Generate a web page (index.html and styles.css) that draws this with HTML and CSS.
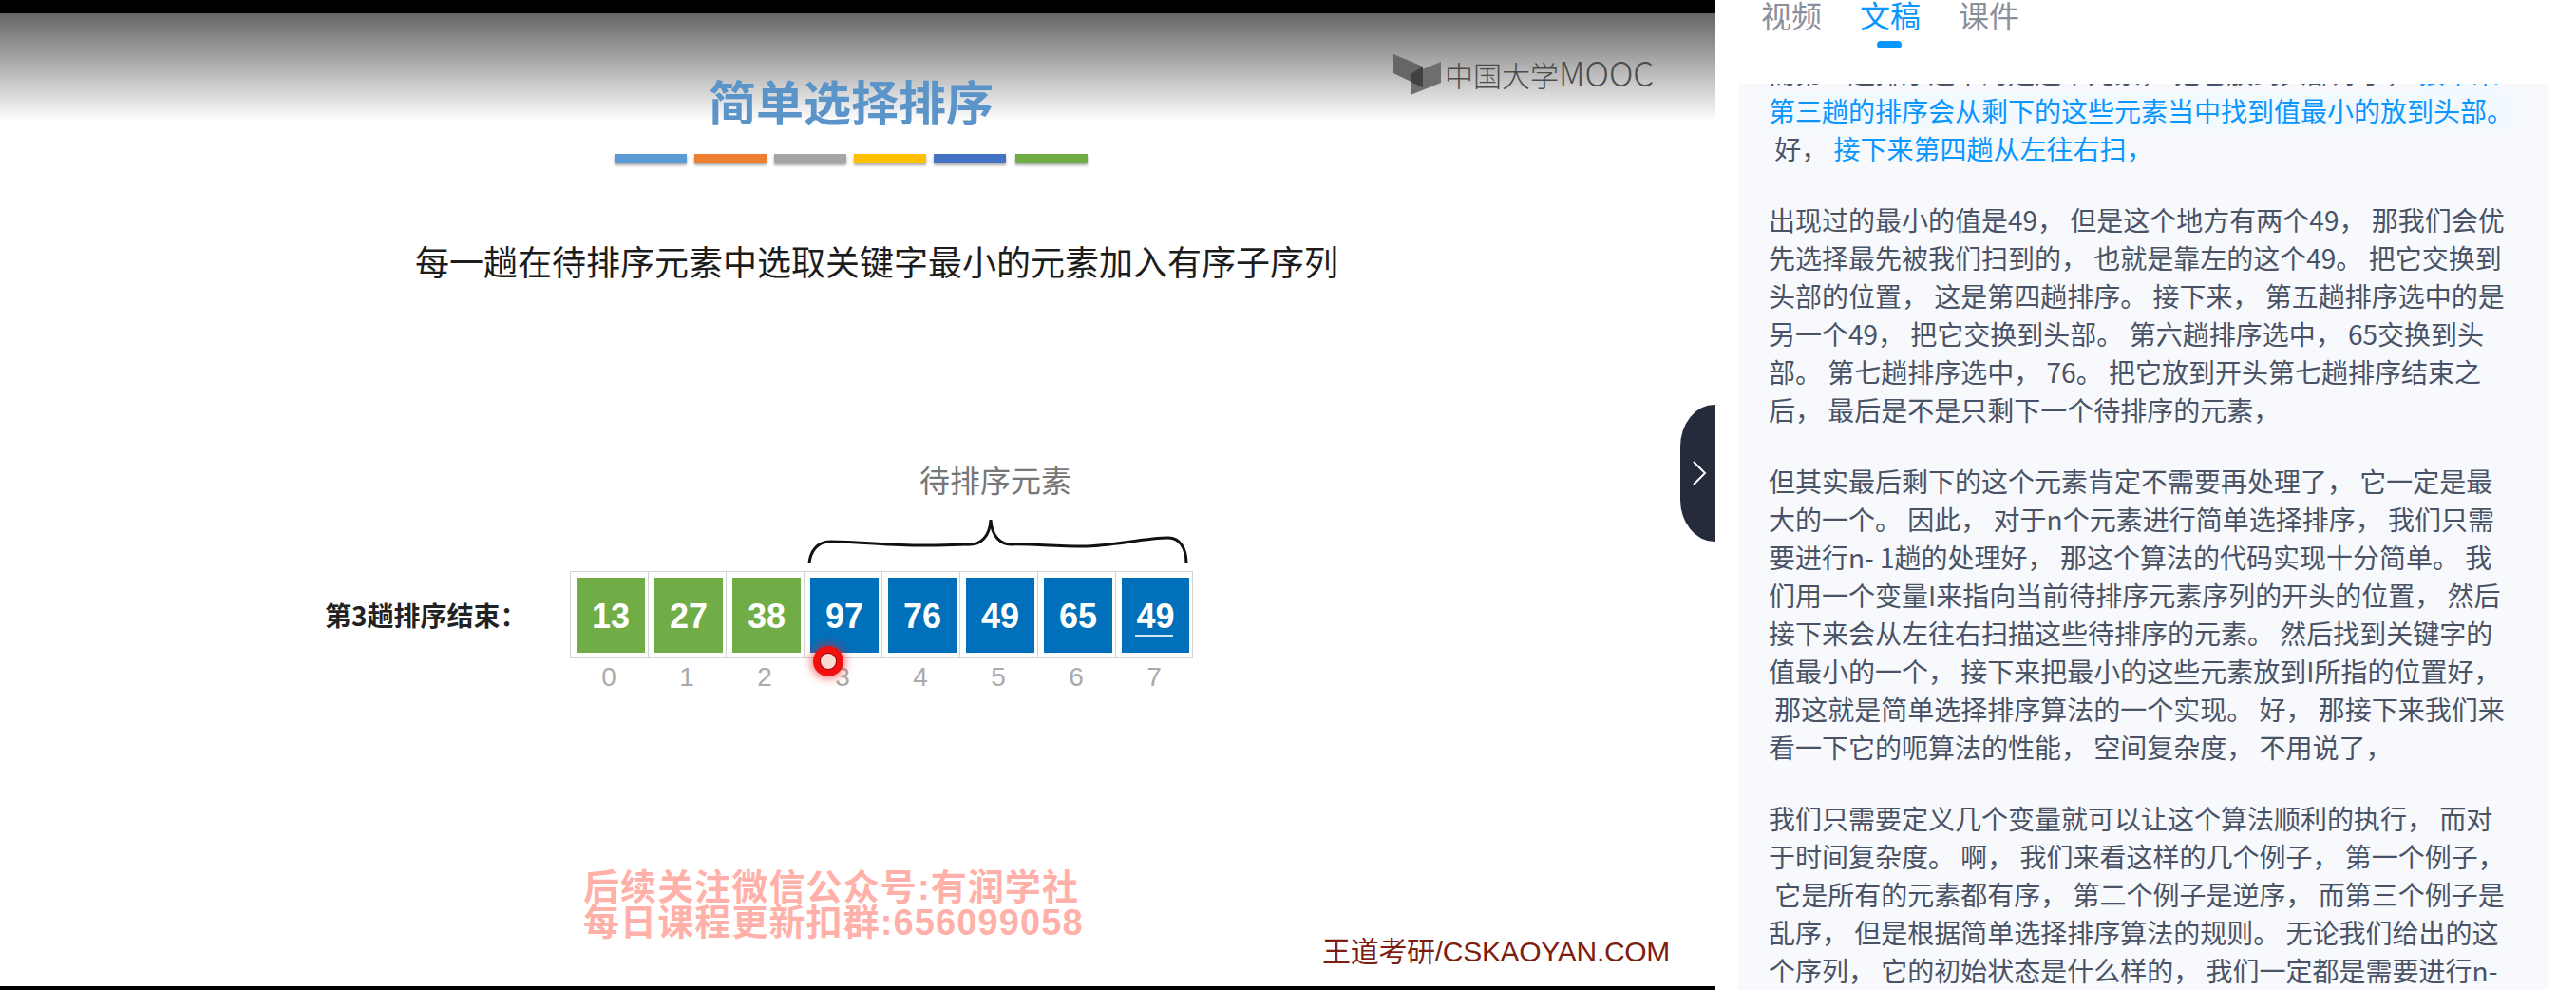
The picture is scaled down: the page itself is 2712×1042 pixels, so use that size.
FILE: index.html
```html
<!DOCTYPE html>
<html lang="zh">
<head>
<meta charset="utf-8">
<title>简单选择排序</title>
<link rel="stylesheet" href="styles.css">
</head>
<body>
<div class="video">
  <div class="slide">
    <div class="shade"></div>
    <div class="logo">
      <svg class="logo-mark" viewBox="0 0 51 44" width="51" height="44">
        <path d="M0 0 L31 13 L31 35 L0 20 Z" fill="#666"/>
        <path d="M18 21 L50 8 L50 30 L18 43 Z" fill="#6e6e6e"/>
        <path d="M18 21 L31 13 L31 35 L18 29 Z" fill="#414141"/>
      </svg>
      <span class="logo-text">中国大学<span class="logo-latin">MOOC</span></span>
    </div>
    <h1 class="title">简单选择排序</h1>
    <div class="bars">
      <i class="bar c1"></i><i class="bar c2"></i><i class="bar c3"></i><i class="bar c4"></i><i class="bar c5"></i><i class="bar c6"></i>
    </div>
    <p class="lead">每一趟在待排序元素中选取关键字最小的元素加入有序子序列</p>
    <div class="pending">待排序元素</div>
    <svg class="brace" viewBox="0 0 404 52" width="404" height="52">
      <path d="M2 48 C3 36 10 25 24 25 C60 25 90 30 130 29 C150 29 165 28 172 28 C182 28 192 20 193 2 C194 20 204 28 214 28 C230 27 260 30 290 30 C320 30 355 21 380 21 C392 21 399 32 399 48" fill="none" stroke="#111" stroke-width="3"/>
    </svg>
    <div class="array-row">
      <div class="array-label">第3趟排序结束：</div>
      <div class="array">
        <div class="cell"><b class="num green">13</b><span class="idx">0</span></div>
        <div class="cell"><b class="num green">27</b><span class="idx">1</span></div>
        <div class="cell"><b class="num green">38</b><span class="idx">2</span></div>
        <div class="cell"><b class="num blue">97</b><span class="idx">3</span></div>
        <div class="cell"><b class="num blue">76</b><span class="idx">4</span></div>
        <div class="cell"><b class="num blue">49</b><span class="idx">5</span></div>
        <div class="cell"><b class="num blue">65</b><span class="idx">6</span></div>
        <div class="cell"><b class="num blue under">49</b><span class="idx">7</span></div>
      </div>
      <div class="pointer"></div>
    </div>
    <div class="promo">
      <div>后续关注微信公众号:有润学社</div>
      <div>每日课程更新扣群:656099058</div>
    </div>
    <div class="brand">王道考研/CSKAOYAN.COM</div>
  </div>
  <div class="toggle">
    <svg viewBox="0 0 16 26" width="16" height="26"><path d="M2 1 L14 13 L2 25" fill="none" stroke="#fff" stroke-width="2"/></svg>
  </div>
</div>
<div class="side">
  <div class="tabs">
    <span class="tab">视频</span>
    <span class="tab active">文稿</span>
    <span class="tab">课件</span>
  </div>
  <div class="script">
    <div class="scroll">
      <div class="para">
        <div class="ln">而第二趟排序选中的是这个元素， 把它放到头部好了， <span class="now hl-end">接下来</span></div>
        <div class="ln now hl">第三趟的排序会从剩下的这些元素当中找到值最小的放到头部。</div>
        <div class="ln"> 好， <span class="now">接下来第四趟从左往右扫，</span></div>
      </div>
      <div class="para">
        <div class="ln">出现过的最小的值是49， 但是这个地方有两个49， 那我们会优</div>
        <div class="ln">先选择最先被我们扫到的， 也就是靠左的这个49。 把它交换到</div>
        <div class="ln">头部的位置， 这是第四趟排序。 接下来， 第五趟排序选中的是</div>
        <div class="ln">另一个49， 把它交换到头部。 第六趟排序选中， 65交换到头</div>
        <div class="ln">部。 第七趟排序选中， 76。 把它放到开头第七趟排序结束之</div>
        <div class="ln">后， 最后是不是只剩下一个待排序的元素，</div>
      </div>
      <div class="para">
        <div class="ln">但其实最后剩下的这个元素肯定不需要再处理了， 它一定是最</div>
        <div class="ln">大的一个。 因此， 对于n个元素进行简单选择排序， 我们只需</div>
        <div class="ln">要进行n- 1趟的处理好， 那这个算法的代码实现十分简单。 我</div>
        <div class="ln">们用一个变量I来指向当前待排序元素序列的开头的位置， 然后</div>
        <div class="ln">接下来会从左往右扫描这些待排序的元素。 然后找到关键字的</div>
        <div class="ln">值最小的一个， 接下来把最小的这些元素放到I所指的位置好，</div>
        <div class="ln"> 那这就是简单选择排序算法的一个实现。 好， 那接下来我们来</div>
        <div class="ln">看一下它的呃算法的性能， 空间复杂度， 不用说了，</div>
      </div>
      <div class="para">
        <div class="ln">我们只需要定义几个变量就可以让这个算法顺利的执行， 而对</div>
        <div class="ln">于时间复杂度。 啊， 我们来看这样的几个例子， 第一个例子，</div>
        <div class="ln"> 它是所有的元素都有序， 第二个例子是逆序， 而第三个例子是</div>
        <div class="ln">乱序， 但是根据简单选择排序算法的规则。 无论我们给出的这</div>
        <div class="ln">个序列， 它的初始状态是什么样的， 我们一定都是需要进行n-</div>
      </div>
    </div>
  </div>
</div>
</body>
</html>
```

FILE: styles.css
```css
* {
  box-sizing: border-box;
}
html, body {
  margin: 0;
  height: 100%;
}
body {
  display: flex;
  width: 2712px;
  height: 1042px;
  overflow: hidden;
  background: #fff;
  font-family: "Noto Sans CJK SC", "Liberation Sans", sans-serif;
}

/* video column */
.video {
  position: relative;
  width: 1806px;
  height: 1042px;
  flex: none;
  background: #000;
  padding: 14px 0 4px;
}
.slide {
  position: relative;
  height: 1024px;
  background: #fff;
  display: flex;
  flex-direction: column;
  overflow: hidden;
}
.shade {
  position: absolute;
  left: 0;
  right: 0;
  top: 0;
  height: 114px;
  background: linear-gradient(#656565, #fff);
}
.logo {
  position: absolute;
  left: 1467px;
  top: 43px;
  display: flex;
  align-items: center;
}
.logo-text {
  font-size: 30px;
  line-height: 44px;
  font-weight: 300;
  color: #4c4c4c;
  margin: -5px 0 0 3px;
  white-space: nowrap;
}
.logo-latin {
  font-size: 35px;
}
.title {
  position: relative;
  margin: 60px 0 0 746px;
  font-size: 50px;
  line-height: 62px;
  font-weight: 700;
  color: #5b94c8;
}
.bars {
  display: flex;
  margin: 26px 0 0 647px;
}
.bar {
  display: block;
  height: 10px;
  width: 76px;
  margin-right: 8px;
  box-shadow: 0 2px 3px rgba(0, 0, 0, .35);
}
.c1 { background: #5b9bd5; }
.c2 { background: #ed7d31; }
.c3 { background: #a5a5a5; }
.c4 { background: #ffc000; }
.c5 { background: #4472c4; }
.c6 { background: #70ad47; margin-left: 2px; margin-right: 0; }
.lead {
  margin: 77px 0 0 437px;
  font-size: 36px;
  line-height: 50px;
  color: #1c1c1c;
  white-space: nowrap;
}
.pending {
  margin: 183px 0 0 968px;
  font-size: 32px;
  line-height: 44px;
  color: #777;
}
.brace {
  display: block;
  margin: 19px 0 0 850px;
}
.array-row {
  position: relative;
  display: flex;
  align-items: flex-start;
  margin-top: 4px;
  padding-left: 342px;
}
.array-label {
  width: 258px;
  font-size: 28px;
  line-height: 40px;
  font-weight: 700;
  color: #222;
  margin-top: 26px;
}
.array {
  display: flex;
  width: 657px;
}
.cell {
  width: 82px;
  display: flex;
  flex-direction: column;
  align-items: center;
}
.num {
  display: block;
  width: 100%;
  height: 92px;
  border: 1px solid #d4d4d4;
  border-right-width: 0;
  padding: 6px 3px 5px 6px;
  background-clip: content-box;
  color: #fff;
  font-family: "Liberation Sans", sans-serif;
  font-size: 36px;
  line-height: 82px;
  text-align: center;
}
.cell:last-child .num {
  border-right-width: 1px;
}
.green { background-color: #70ad47; }
.blue { background-color: #0070ba; }
.under {
  position: relative;
}
.under::after {
  content: "";
  position: absolute;
  left: 20px;
  right: 20px;
  bottom: 22px;
  height: 2px;
  background: #cfe6f5;
}
.idx {
  font-family: "Liberation Sans", sans-serif;
  font-size: 28px;
  line-height: 40px;
  color: #aaa;
}
.pointer {
  position: absolute;
  left: 864px;
  top: 87px;
  width: 16px;
  height: 16px;
  border-radius: 50%;
  background: #fbdcd2;
  box-shadow: 0 0 0 1px #900, 0 0 0 8px #f01010, 0 0 9px 11px rgba(240, 30, 30, .5);
}
.promo {
  position: absolute;
  left: 614px;
  top: 902px;
  font-family: "Liberation Sans", "Noto Sans CJK SC", sans-serif;
  font-size: 38px;
  line-height: 37px;
  letter-spacing: 1.1px;
  font-weight: 700;
  color: #ffb1a9;
  white-space: nowrap;
}
.brand {
  position: absolute;
  left: 1392px;
  top: 968px;
  font-family: "Liberation Sans", "Noto Sans CJK SC", sans-serif;
  font-size: 30px;
  line-height: 40px;
  letter-spacing: -.3px;
  color: #7c1d10;
  white-space: nowrap;
}
.toggle {
  position: absolute;
  left: 1769px;
  top: 426px;
  width: 37px;
  height: 144px;
  background: #252b3a;
  border-radius: 36px 0 0 36px / 44px 0 0 44px;
  display: flex;
  align-items: center;
  padding-left: 12px;
}

/* side column */
.side {
  flex: 1;
  display: flex;
  flex-direction: column;
  min-width: 0;
}
.tabs {
  height: 88px;
  display: flex;
  gap: 40px;
  padding-left: 48px;
}
.tab {
  position: relative;
  font-size: 32px;
  line-height: 30px;
  height: 30px;
  color: #8a8f9b;
}
.tab.active {
  color: #0a96ff;
}
.tab.active::after {
  content: "";
  position: absolute;
  left: 18px;
  top: 43px;
  width: 26px;
  height: 8px;
  border-radius: 4px;
  background: #0a96ff;
}
.script {
  flex: 1;
  margin: 0 30px 0 24px;
  background: #f7f9fd;
  overflow: hidden;
}
.scroll {
  margin-top: -32px;
  padding-left: 32px;
}
.para {
  margin-bottom: 35px;
}
.ln {
  font-size: 28px;
  line-height: 40px;
  white-space: pre;
  color: #4a5365;
}
.now {
  color: #0a96ff;
}
.hl {
  width: 784px;
  background: #f2f9ff;
}
.hl-end {
  background: #f2f9ff;
}
```
